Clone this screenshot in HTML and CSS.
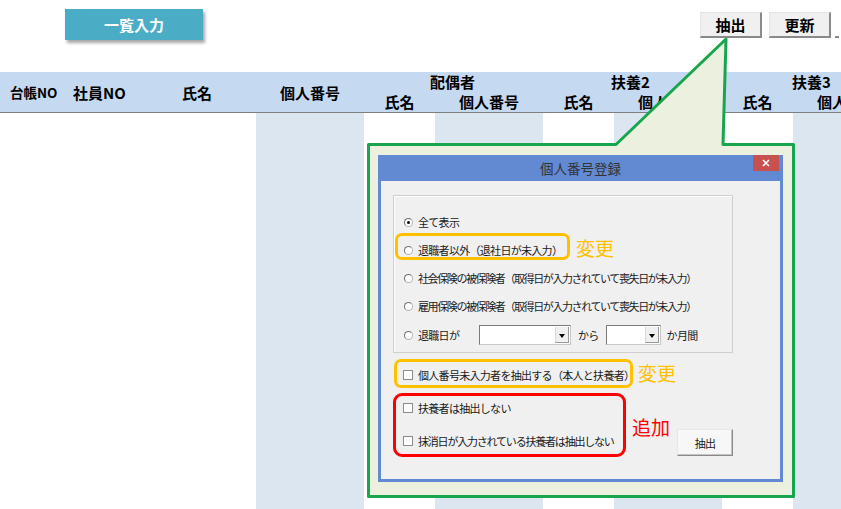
FILE: index.html
```html
<!DOCTYPE html>
<html lang="ja">
<head>
    <meta charset="UTF-8">
    <meta name="viewport" content="width=device-width, initial-scale=1.0">
    <title>個人番号登録</title>
    <link rel="stylesheet" href="styles.css">
</head>
<body>
    <div class="page">
        <!-- 上部ボタン -->
        <div class="toolbar">
            <div class="menu-button">一覧入力</div>
            <div class="tool-buttons">
                <button class="sheet-btn">抽出</button>
                <button class="sheet-btn">更新</button>
                <span class="cut-btn"></span>
            </div>
        </div>

        <!-- 見出し -->
        <div class="sheet-head">
            <div class="hcell c-ledger">台帳NO</div>
            <div class="hcell c-emp">社員NO</div>
            <div class="hcell c-name">氏名</div>
            <div class="hcell c-num">個人番号</div>
            <div class="hgroup g1">配偶者</div>
            <div class="hgroup g2">扶養2</div>
            <div class="hgroup g3">扶養3</div>
            <div class="hsub">氏名</div>
            <div class="hsub">個人番号</div>
            <div class="hsub">氏名</div>
            <div class="hsub">個人番号</div>
            <div class="hsub">氏名</div>
            <div class="hsub">個人番号</div>
        </div>

        <!-- 明細 -->
        <div class="sheet-body">
            <div></div><div></div><div></div>
            <div class="shade"></div>
            <div></div>
            <div class="shade"></div>
            <div></div>
            <div class="shade"></div>
            <div></div>
            <div class="shade"></div>
        </div>

        <!-- 吹き出し -->
        <svg class="callout" width="841" height="509" viewBox="0 0 841 509">
            <path d="M368.5,144.5 H616 L726,39 L723,144.5 H793.5 V496.5 H368.5 Z"
                  fill="#ebf1de" stroke="#17a64d" stroke-width="3" stroke-linejoin="round"/>
        </svg>

        <!-- 個人番号登録ダイアログ -->
        <div class="dialog">
            <div class="dialog-title">
                個人番号登録
                <span class="close-btn">
                    <svg width="10" height="10" viewBox="0 0 10 10">
                        <path d="M2,2 L8,8 M8,2 L2,8" stroke="#fff" stroke-width="1.6"/>
                    </svg>
                </span>
            </div>
            <div class="dialog-client">
                <div class="group-box">
                    <label class="opt"><span class="radio checked"></span>全て表示</label>
                    <label class="opt"><span class="radio"></span>退職者以外（退社日が未入力）</label>
                    <label class="opt tight"><span class="radio"></span>社会保険の被保険者（取得日が入力されていて喪失日が未入力）</label>
                    <label class="opt tight"><span class="radio"></span>雇用保険の被保険者（取得日が入力されていて喪失日が未入力）</label>
                    <div class="opt opt-date">
                        <span class="radio"></span>
                        <span class="retire-label">退職日が</span>
                        <span class="combo combo-wide"><span class="combo-arrow"></span></span>
                        <span class="combo-text">から</span>
                        <span class="combo combo-short"><span class="combo-arrow"></span></span>
                        <span class="combo-text">か月間</span>
                    </div>
                </div>

                <div class="bottom-area">
                    <div class="checks">
                        <label class="opt"><span class="check"></span>個人番号未入力者を抽出する（本人と扶養者）</label>
                        <label class="opt"><span class="check"></span>扶養者は抽出しない</label>
                        <label class="opt semi-tight"><span class="check"></span>抹消日が入力されている扶養者は抽出しない</label>
                    </div>
                    <button class="dlg-btn">抽出</button>
                </div>
            </div>

            <!-- 注記 -->
            <div class="mark mark-orange mark-1"></div>
            <div class="note note-orange note-1">変更</div>
            <div class="mark mark-orange mark-2"></div>
            <div class="note note-orange note-2">変更</div>
            <div class="mark mark-red"></div>
            <div class="note note-red note-3">追加</div>
        </div>
    </div>
</body>
</html>
```

FILE: styles.css
```css
/* 基本 */
body {
    margin: 0;
    background-color: #fff;
    font-family: "Noto Sans CJK JP", "Noto Sans", sans-serif;
    color: #000;
}

.page {
    position: relative;
    width: 841px;
    height: 509px;
    overflow: hidden;
}

/* 上部ボタン */
.toolbar {
    display: flex;
    align-items: flex-start;
    height: 72px;
}

.menu-button {
    margin: 9px 0 0 65px;
    width: 138px;
    height: 31px;
    background-color: #4bacc6;
    color: #fff;
    font-weight: bold;
    font-size: 15px;
    display: flex;
    align-items: center;
    justify-content: center;
    box-shadow: 2px 3px 3px rgba(0, 0, 0, 0.35);
}

.tool-buttons {
    margin-left: auto;
    margin-top: 12px;
    padding-right: 2px;
    display: flex;
    gap: 7px;
    position: relative;
    z-index: 2;
}

.sheet-btn {
    width: 62px;
    height: 26px;
    padding: 0;
    background-color: #f0f0f0;
    border-style: solid;
    border-width: 1px 2px 2px 1px;
    border-color: #e3e3e3 #8a8a8a #8a8a8a #e3e3e3;
    font-family: inherit;
    font-size: 15px;
    font-weight: bold;
    line-height: 1;
}

.cut-btn {
    width: 4px;
    height: 26px;
    margin-left: -3px;
    border-bottom: 2px solid #8a8a8a;
    box-sizing: border-box;
}

/* 見出し */
.sheet-head {
    display: grid;
    grid-template-columns: 66px 96px 94px 108px 71px 108px 71px 108px 71px 108px;
    grid-template-rows: 20px 20px;
    background-color: #c5d9f1;
    border-bottom: 1px solid #7f7f7f;
    font-weight: bold;
    font-size: 15px;
    width: 901px;
}

.hcell {
    grid-row: 1 / span 2;
    align-self: center;
    white-space: nowrap;
}

.c-ledger {
    font-size: 13.5px;
    padding-left: 10px;
}

.c-emp {
    padding-left: 7px;
}

.c-name {
    padding-left: 20px;
}

.c-num {
    text-align: center;
}

.hgroup {
    grid-row: 1;
    padding-left: 68px;
    line-height: 20px;
    white-space: nowrap;
}

.g1 { grid-column: 5 / span 2; padding-left: 66px; }
.g2 { grid-column: 7 / span 2; }
.g3 { grid-column: 9 / span 2; padding-left: 70px; }

.hsub {
    grid-row: 2;
    text-align: center;
    line-height: 20px;
    white-space: nowrap;
}

/* 明細 */
.sheet-body {
    display: grid;
    grid-template-columns: 66px 96px 94px 108px 71px 108px 71px 108px 71px 108px;
    height: 396px;
    width: 901px;
}

.sheet-body .shade {
    background-color: #dce6f1;
}

/* 吹き出し */
.callout {
    position: absolute;
    left: 0;
    top: 0;
    z-index: 1;
}

/* ダイアログ */
.dialog {
    position: absolute;
    left: 378px;
    top: 155px;
    width: 405px;
    height: 327px;
    box-sizing: border-box;
    padding: 0 3px 3px;
    background-color: #628ad3;
    display: flex;
    flex-direction: column;
    z-index: 3;
    font-size: 11px;
    letter-spacing: -0.7px;
}

.dialog-title {
    height: 26px;
    display: flex;
    align-items: center;
    justify-content: center;
    font-size: 13.5px;
    letter-spacing: 0;
    color: #333;
    position: relative;
}

.close-btn {
    position: absolute;
    right: 1px;
    top: 0;
    width: 26px;
    height: 16px;
    background-color: #c75050;
    display: flex;
    align-items: center;
    justify-content: center;
}

.dialog-client {
    flex: 1;
    background-color: #f0f0f0;
    padding: 14px 0 0 12px;
}

.group-box {
    width: 340px;
    height: 158px;
    box-sizing: border-box;
    border: 1px solid #cfcfcf;
    box-shadow: inset 1px 1px 0 #fff;
    padding: 16px 0 0 10px;
    display: flex;
    flex-direction: column;
    gap: 8px;
}

.opt {
    height: 20px;
    display: flex;
    align-items: center;
    white-space: nowrap;
    color: #1a1a1a;
}

.opt.tight {
    letter-spacing: -1.4px;
}

.opt.semi-tight {
    letter-spacing: -1.2px;
}

.opt-date {
    margin-top: 1px;
}

.radio {
    width: 9px;
    height: 9px;
    border: 1px solid;
    border-color: #6f6f6f #b5b5b5 #b5b5b5 #6f6f6f;
    border-radius: 50%;
    background-color: #fff;
    margin-right: 5px;
    box-sizing: border-box;
    position: relative;
    flex: none;
}

.radio.checked::after {
    content: "";
    position: absolute;
    left: 2px;
    top: 2px;
    width: 3px;
    height: 3px;
    border-radius: 50%;
    background-color: #111;
}

.check {
    width: 10px;
    height: 10px;
    border: 1px solid #8d8d8d;
    background-color: #fff;
    margin-right: 5px;
    box-sizing: border-box;
    flex: none;
}

.retire-label {
    width: 61px;
}

.combo {
    height: 20px;
    box-sizing: border-box;
    border: 1px solid;
    border-color: #7a7a7a #c8c8c8 #c8c8c8 #7a7a7a;
    background-color: #fff;
    display: flex;
    justify-content: flex-end;
    padding: 1px;
}

.combo-wide {
    width: 92px;
}

.combo-short {
    width: 55px;
}

.combo-arrow {
    width: 14px;
    background-color: #f0f0f0;
    border-left: 1px solid #d8d8d8;
    border-bottom: 1px solid #9a9a9a;
    border-right: 1px solid #9a9a9a;
    box-sizing: border-box;
    position: relative;
}

.combo-arrow::after {
    content: "";
    position: absolute;
    left: 3px;
    top: 7px;
    border-left: 3.5px solid transparent;
    border-right: 3.5px solid transparent;
    border-top: 4px solid #000;
}

.combo-text {
    margin: 0 7px;
}

.combo-text:last-child {
    margin: 0 6px;
}

/* 下部 */
.bottom-area {
    width: 340px;
    margin-top: 12px;
    display: flex;
    justify-content: space-between;
    align-items: flex-start;
}

.checks {
    padding-left: 10px;
    display: flex;
    flex-direction: column;
    gap: 13px;
}

.dlg-btn {
    margin-top: 64px;
    width: 56px;
    height: 27px;
    padding: 0;
    background-color: #f7f7f7;
    border: 1px solid;
    border-color: #e6e6e6 #8a8a8a #8a8a8a #e6e6e6;
    box-shadow: inset -1px -1px 0 #c4c4c4;
    font-family: inherit;
    font-size: 11px;
    letter-spacing: -0.7px;
    color: #1a1a1a;
}

/* 注記 */
.mark {
    position: absolute;
    box-sizing: border-box;
    border-style: solid;
    border-width: 3px;
}

.mark-orange {
    border-color: #ffc000;
    border-radius: 7px;
}

.mark-1 {
    left: 17px;
    top: 78px;
    width: 175px;
    height: 27px;
}

.mark-2 {
    left: 16px;
    top: 204px;
    width: 239px;
    height: 29px;
}

.mark-red {
    border-color: #ff0000;
    border-radius: 9px;
    left: 15px;
    top: 238px;
    width: 233px;
    height: 64px;
}

.note {
    position: absolute;
    font-size: 19px;
    line-height: 20px;
    letter-spacing: 0;
}

.note-orange {
    color: #ffc000;
}

.note-red {
    color: #ff0000;
}

.note-1 {
    left: 198px;
    top: 83px;
}

.note-2 {
    left: 260px;
    top: 208px;
}

.note-3 {
    left: 254px;
    top: 262px;
}
```
